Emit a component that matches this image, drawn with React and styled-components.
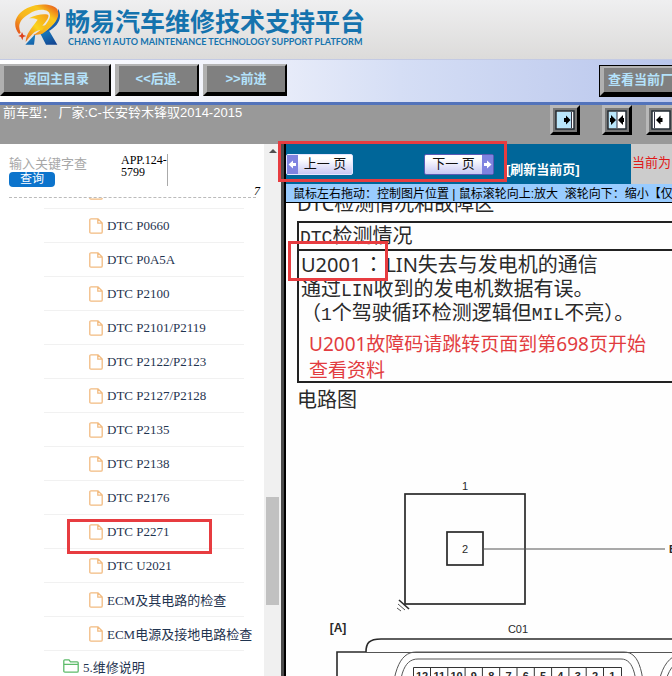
import React from 'react';
import styled, { createGlobalStyle } from 'styled-components';

const SANS = '"Liberation Sans", "Noto Sans CJK SC", sans-serif';
const SERIF = '"Liberation Serif", "Noto Sans CJK SC", serif';
const DOC = '"Noto Sans", "Noto Sans CJK SC", sans-serif';

const GlobalStyle = createGlobalStyle`
  * { box-sizing: border-box; }
  body { margin: 0; font-family: ${SANS}; font-size: 13px; overflow: hidden; }
  button, input { font-family: inherit; margin: 0; }
  svg { flex: none; }
`;

const Page = styled.div`
  display: flex;
  flex-direction: column;
  height: 100vh;
  background: #fff;
`;

const Header = styled.header`
  display: flex;
  align-items: flex-start;
  gap: 3px;
  height: 59px;
  padding: 4px 14px 0;
  background: linear-gradient(#efeff0, #dcdbda);
  overflow: hidden;
`;

const Brand = styled.div`
  display: flex;
  flex-direction: column;
  white-space: nowrap;
  color: #1573ae;
`;

const BrandName = styled.h1`
  margin: 0;
  font: 700 25px/32px "Noto Sans CJK SC", sans-serif;
`;

const BrandSub = styled.span`
  padding-left: 3px;
  font: 700 9px/11px Lato, sans-serif;
`;

const Toolbar = styled.nav`
  display: flex;
  gap: 4px;
  height: 46px;
  padding-top: 4px;
  border-top: 1px solid #c3cae4;
  border-bottom: 3px solid #5273bb;
  background: linear-gradient(90deg, #fff 0, #f0f2fb 230px, #d5def5 400px, #b9c6ec 672px);
  overflow: hidden;
`;

const BevelButton = styled.button`
  flex: none;
  width: ${(p) => p.$width}px;
  height: 32px;
  padding: 0 0 3px;
  border-style: solid;
  border-width: 2px 2px 4px 4px;
  border-color: #b4b4b4 #000 #000 #b0b0b0;
  background: #808080;
  color: #b4e2fb;
  font-size: 13px;
  font-weight: 700;
  white-space: nowrap;
  ${(p) => p.$end && 'margin: 2px -7px 0 auto; outline: 1px solid #000; height: 30px;'}
`;

const StatusBar = styled.div`
  display: flex;
  justify-content: space-between;
  height: 39px;
  padding-left: 3px;
  background: #999;
  color: #fff;
  line-height: 16px;
  white-space: pre;
  overflow: hidden;
`;

const FrameButtons = styled.div`
  display: flex;
  gap: 22px;
  margin-right: -4px;
`;

const FrameButton = styled.button`
  width: 30px;
  height: 30px;
  padding: 2px;
  border: 3px solid;
  border-color: #b8b8b8 #000 #000 #b8b8b8;
  background: #777;
  line-height: 0;
  &:last-child { margin-left: -8px; }
`;

const Body = styled.div`
  display: flex;
  flex: 1;
  min-height: 0;
`;

const Sidebar = styled.aside`
  display: flex;
  flex-direction: column;
  position: relative;
  flex: 0 0 264px;
  min-width: 0;
  font-family: ${SERIF};
`;

const SearchForm = styled.form`
  display: flex;
  flex: none;
  height: 54px;
  margin: 0 8px 0 9px;
  padding-top: 10px;
  border-bottom: 1px dashed #bbb;
`;

const SearchField = styled.div`
  display: flex;
  flex-direction: column;
  align-items: flex-start;
  width: 112px;
  padding-top: 1px;
`;

const SearchInput = styled.input`
  width: 79px;
  height: 17px;
  padding: 0;
  border: 0;
  background: transparent;
  font-size: 13px;
  outline: 0;
  &::placeholder { color: #a8a8a8; }
`;

const SearchButton = styled.button`
  width: 46px;
  height: 15px;
  padding: 0;
  border: 0;
  border-radius: 4px;
  background: #0c74cc;
  color: #fff;
  font-size: 12px;
  line-height: 15px;
`;

const Version = styled.span`
  width: 47px;
  height: 32px;
  border-right: 1px solid #aaa;
  font-size: 12px;
  line-height: 12px;
  white-space: pre;
`;

const Counter = styled.span`
  align-self: flex-end;
  margin: 0 -4px 0 auto;
  font-size: 12px;
  font-style: italic;
  line-height: 12px;
`;

const Tree = styled.ul`
  flex: 1;
  min-height: 0;
  margin: 0;
  padding: 0;
  list-style: none;
  overflow: hidden;
`;

const TreeItem = styled.li`
  height: 34px;
  margin-left: ${(p) => (p.$folder ? 20 : 44)}px;
  margin-right: 20px;
  border-bottom: 1px solid #f1f1f1;
  &:first-child { margin-top: -23px; }
`;

const TreeLink = styled.a`
  display: flex;
  align-items: center;
  gap: 4px;
  height: ${(p) => (p.$folder ? 30 : 33)}px;
  padding-left: ${(p) => (p.$folder ? 43 : 45)}px;
  color: #1f3450;
  font-size: 13px;
  text-decoration: none;
  white-space: nowrap;
`;

const ScrollTrack = styled.div`
  display: flex;
  flex-direction: column;
  justify-content: space-between;
  align-items: center;
  flex: 0 0 17px;
  padding: 5px 0 71px;
  background: #f0f0f0;
`;

const ScrollUp = styled.span`
  border: 4px solid transparent;
  border-top: 0;
  border-bottom: 4px solid #505050;
`;

const ScrollThumb = styled.span`
  width: 13px;
  height: 108px;
  background: #c1c1c1;
`;

const Viewer = styled.main`
  position: relative;
  display: flex;
  flex-direction: column;
  flex: 1;
  min-width: 0;
  border-left: 3px solid #4b4b4b;
`;

const PagerRow = styled.div`
  display: flex;
  flex: none;
  height: 40px;
  border-left: 2px solid #000;
  background: #ccc;
`;

const Pager = styled.div`
  display: flex;
  align-items: center;
  flex: 0 0 345px;
  background: #069;
`;

const PageButton = styled.button`
  display: flex;
  flex-direction: ${(p) => (p.$next ? 'row-reverse' : 'row')};
  align-items: center;
  justify-content: space-between;
  width: ${(p) => (p.$next ? 70 : 67)}px;
  height: 21px;
  margin-left: ${(p) => (p.$next ? 71 : 0)}px;
  padding: 0;
  border: 1px solid ${(p) => (p.$next ? '#5b5bb5' : '#e6e6ff')};
  border-radius: 2px;
  background: linear-gradient(#fff 20%, #c8c8f4);
  color: #111;
  font-size: 13px;
  line-height: 18px;
  white-space: nowrap;
`;

const PageLabel = styled.span`
  flex: 1;
  text-align: center;
`;

const Refresh = styled.a`
  margin: 8px 0 0 12px;
  color: #fff;
  font-size: 13px;
  font-weight: 700;
  text-decoration: none;
  white-space: nowrap;
`;

const Current = styled.span`
  padding-left: 1px;
  color: #e01818;
  font-size: 13px;
  line-height: 38px;
  white-space: nowrap;
  overflow: hidden;
`;

const Hint = styled.div`
  flex: none;
  height: 19px;
  padding-left: 7px;
  border-left: 2px solid #000;
  border-bottom: 1px solid #000;
  background: #9cf;
  font-size: 12px;
  line-height: 20px;
  white-space: pre;
  overflow: hidden;
`;

const Sheet = styled.article`
  flex: 1;
  min-height: 0;
  padding-left: 11px;
  border-left: 2px solid #000;
  background: #fefefe;
  color: #2a2a2a;
  font: 20px/24px ${DOC};
  white-space: nowrap;
  overflow: hidden;
`;

const SheetTitle = styled.h2`
  margin: ${(p) => (p.$cut ? '-11px 0 5px' : '5px 0 3px')};
  font-size: 20px;
  font-weight: 400;
  line-height: 24px;
`;

const Findings = styled.section`
  border: 2px solid #222;
  border-right: 0;
`;

const FindingHead = styled.h3`
  margin: 0;
  padding-left: 1px;
  border-bottom: 2px solid #222;
  font-size: 20px;
  font-weight: 400;
  line-height: 26px;
`;

const FindingBody = styled.div`
  height: 130px;
  padding: 2px 0 0 2px;
`;

const Mono = styled.span`
  font: 18px/20px "Liberation Mono", monospace;
`;

const Colon = styled.span`
  display: inline-block;
  width: 24px;
  text-align: center;
  font-family: "Noto Sans CJK TC", sans-serif;
  line-height: 20px;
`;

const Line = styled.p`
  margin: 0;
  height: 24px;
`;

const Note = styled.p`
  margin: 6px 0 0 8px;
  color: #e23c40;
  font-size: 19px;
  line-height: 26px;
`;

const Drawing = styled.svg`
  display: block;
  margin-left: -11px;
  font-family: "Liberation Sans", sans-serif;
`;

const Mark = styled.div`
  position: absolute;
  z-index: 2;
  left: ${(p) => p.$x}px;
  top: ${(p) => p.$y}px;
  width: ${(p) => p.$w}px;
  height: ${(p) => p.$h}px;
  border: 3px solid #e73c40;
  pointer-events: none;
`;

const Logo = () => (
  <svg width="48" height="43" viewBox="0 0 144 129" aria-hidden="true">
    <defs>
      <linearGradient id="ring" x1="0" y1="1" x2="1" y2="0">
        <stop offset="0" stopColor="#e2431c" />
        <stop offset=".4" stopColor="#f7b51c" />
        <stop offset=".7" stopColor="#f9c71c" />
        <stop offset="1" stopColor="#e4451c" />
      </linearGradient>
      <linearGradient id="bolt" x1="0" y1="1" x2="1" y2="0">
        <stop offset="0" stopColor="#e8641c" />
        <stop offset=".5" stopColor="#fbd51c" />
        <stop offset="1" stopColor="#f49a1c" />
      </linearGradient>
      <linearGradient id="leg" x1="0" y1="0" x2="1" y2="1">
        <stop offset="0" stopColor="#1c9bd8" />
        <stop offset="1" stopColor="#123f8c" />
      </linearGradient>
    </defs>
    <path d="M34 122 L64 90 L60 122Z M78 87 L104 78 L130 122 L96 122Z" fill="url(#leg)" />
    <path d="M132 14 C148 42 130 68 103 82 L84 88 C112 72 134 48 132 14Z" fill="#1b60ae" />
    <path d="M15 90 C-8 62 5 29 40 12 C76 -5 119 0 130 16 C142 42 116 68 84 90 L57 94 C84 78 106 54 108 36 C109 14 72 11 45 30 C17 46 10 65 20 86Z" fill="url(#ring)" />
    <path d="M45 43 C66 32 88 28 102 32 C107 38 98 50 85 65 L96 64 L84 79 C67 78 58 84 35 114 C37 88 49 77 71 47 C61 42 54 43 45 43Z" fill="url(#bolt)" />
    <path d="M24 84 L28 93 L37 96 L28 99 L25 109 L21 99 L13 96 L21 92Z" fill="#de421c" />
  </svg>
);

const FileIcon = () => (
  <svg width="14" height="16" viewBox="0 0 14 16" fill="none" stroke="#f2bb80" strokeWidth="1.3" aria-hidden="true">
    <path d="M2 .8H9L13.2 5V14Q13.2 15.2 12 15.2H2Q.8 15.2 .8 14V2Q.8 .8 2 .8ZM8.8 1V5.2H13" />
  </svg>
);

const FolderIcon = () => (
  <svg width="16" height="14" viewBox="0 0 16 14" fill="none" stroke="#5dbb6a" strokeWidth="1.3" aria-hidden="true">
    <path d="M.8 12V1.8Q.8 .8 1.8 .8H6L7.5 2.8H14.2Q15.2 2.8 15.2 3.8V12Q15.2 13.2 14 13.2H2Q.8 13.2 .8 12ZM1 5.3H15" />
  </svg>
);

const FrameIcon = ({ kind }) => (
  <svg width="20" height="20" viewBox="0 0 20 20" aria-hidden="true">
    <rect x="1" y="1" width="18" height="18" fill="#fff" stroke="#222b33" strokeWidth="1.5" />
    {kind !== 'left' && <rect x="2" y="2" width={kind === 'right' ? 14 : 8} height="16" fill="#b9e6fb" />}
    <path d={{ right: 'M16.5 2V18', both: 'M10 2V18', left: 'M3.5 2V18' }[kind]} stroke="#334" />
    {kind === 'right' && <path d="M9 8H11V5.5L15.5 10L11 14.5V12H9Z" fill="#000" />}
    {kind === 'both' && <path d="M3 8H4V5L9 10L4 15V12H3Z M17 8H16V5L11 10L16 15V12H17Z" fill="#000" />}
    {kind === 'left' && <path d="M11.5 8H9.5V5.5L5 10L9.5 14.5V12H11.5Z" fill="#000" />}
  </svg>
);

const CapIcon = ({ next }) => (
  <svg width="11" height="19" viewBox="0 0 11 19" aria-hidden="true">
    <rect width="11" height="19" fill="#7f83e0" />
    <path d={next ? 'M2 8H5V5.5L9.5 9.5L5 13.5V11H2Z' : 'M9 8H6V5.5L1.5 9.5L6 13.5V11H9Z'} fill="#fff" />
  </svg>
);

const CODES = ['P0660', 'P0A5A', 'P2100', 'P2101/P2119', 'P2122/P2123', 'P2127/P2128', 'P2135', 'P2138', 'P2176', 'P2271', 'U2021'];
const FILES = ['', ...CODES.map((c) => `DTC ${c}`), 'ECM及其电路的检查', 'ECM电源及接地电路检查'];
const PINS = [12, 11, 10, 9, 8, 7, 6, 5, 4, 3, 2, 1];

const Circuit = () => (
  <Drawing width="600" height="300" viewBox="286 414 600 300" fill="none" stroke="#2a2a2a">
    <rect x="405" y="493" width="120" height="110" strokeWidth="1.7" />
    <rect x="447" y="531" width="36" height="33" strokeWidth="1.7" />
    <path d="M483 548H665" stroke="#555" />
    <path d="M399 599L409 608" strokeWidth="1.6" />
    <path d="M398 603L405 609M397 607L401 610" stroke="#555" />
    <path d="M337 720V651H366C366 642 369 638 381 638H886" strokeWidth="1.6" />
    <g stroke="#555">
      <path d="M366 651.5H886" />
      <path d="M391 720C391 672 399 651 416 651H624C640 651 645 672 645 720" />
      <path d="M398 720C398 675 403 658 418 658H621C634 658 638 675 638 720" />
      <path d="M656 720C656 676 662 652 690 651" />
      <path d="M662 720C662 680 668 658 690 658" />
      <path d="M413.5 720V666.5H621.5V720" stroke="#333" />
      {PINS.slice(1).map((pin, i) => (
        <path key={pin} d={`M${430.5 + i * 17.3} 667V720`} stroke="#333" />
      ))}
    </g>
    <g stroke="none" fill="#2a2a2a" fontSize="11" textAnchor="middle">
      <text x="465" y="489">1</text>
      <text x="465" y="552">2</text>
      <text x="673" y="552" fontWeight="700">B</text>
      <text x="518" y="632">C01</text>
      <text x="338" y="631" fontSize="12" fontWeight="700">[A]</text>
      {PINS.map((pin, i) => (
        <text key={pin} x={422 + i * 17.3} y="679" fontWeight="700">{pin}</text>
      ))}
    </g>
  </Drawing>
);

export default function App() {
  return (
    <Page>
      <GlobalStyle />
      <Header>
        <Logo />
        <Brand>
          <BrandName>畅易汽车维修技术支持平台</BrandName>
          <BrandSub>CHANG YI AUTO MAINTENANCE TECHNOLOGY SUPPORT PLATFORM</BrandSub>
        </Brand>
      </Header>
      <Toolbar>
        <BevelButton $width={111}>返回主目录</BevelButton>
        <BevelButton $width={84}>&lt;&lt;后退.</BevelButton>
        <BevelButton $width={84}>&gt;&gt;前进</BevelButton>
        <BevelButton $width={79} $end>查看当前厂</BevelButton>
      </Toolbar>
      <StatusBar>
        <span>前车型： 厂家:C-长安铃木锋驭2014-2015</span>
        <FrameButtons>
          <FrameButton aria-label="右"><FrameIcon kind="right" /></FrameButton>
          <FrameButton aria-label="中"><FrameIcon kind="both" /></FrameButton>
          <FrameButton aria-label="左"><FrameIcon kind="left" /></FrameButton>
        </FrameButtons>
      </StatusBar>
      <Body>
        <Sidebar>
          <SearchForm onSubmit={(e) => e.preventDefault()}>
            <SearchField>
              <SearchInput aria-label="关键字" placeholder="输入关键字查" />
              <SearchButton>查询</SearchButton>
            </SearchField>
            <Version>{'APP.124-\n5799'}</Version>
            <Counter>7</Counter>
          </SearchForm>
          <Tree>
            {FILES.map((name) => (
              <TreeItem key={name}>
                <TreeLink href="#"><FileIcon />{name}</TreeLink>
              </TreeItem>
            ))}
            <TreeItem $folder>
              <TreeLink href="#" $folder><FolderIcon />5.维修说明</TreeLink>
            </TreeItem>
          </Tree>
          <Mark $x={67} $y={375} $w={145} $h={35} />
        </Sidebar>
        <ScrollTrack>
          <ScrollUp />
          <ScrollThumb />
        </ScrollTrack>
        <Viewer>
          <PagerRow>
            <Pager>
              <PageButton><CapIcon /><PageLabel>上一 页</PageLabel></PageButton>
              <PageButton $next><CapIcon next /><PageLabel>下一 页</PageLabel></PageButton>
              <Refresh href="#">[刷新当前页]</Refresh>
            </Pager>
            <Current>当前为</Current>
          </PagerRow>
          <Hint>鼠标左右拖动：控制图片位置 | 鼠标滚轮向上:放大  滚轮向下：缩小【仅</Hint>
          <Sheet>
            <SheetTitle $cut>DTC检测情况和故障区</SheetTitle>
            <Findings>
              <FindingHead><Mono>DTC</Mono>检测情况</FindingHead>
              <FindingBody>
                <Line>U2001<Colon>：</Colon>LIN失去与发电机的通信</Line>
                <Line>通过<Mono>LIN</Mono>收到的发电机数据有误。</Line>
                <Line>（<Mono>1</Mono>个驾驶循环检测逻辑但<Mono>MIL</Mono>不亮）。</Line>
                <Note>U2001故障码请跳转页面到第698页开始<br />查看资料</Note>
              </FindingBody>
            </Findings>
            <SheetTitle>电路图</SheetTitle>
            <Circuit />
          </Sheet>
          <Mark $x={-6} $y={-3} $w={229} $h={41} />
          <Mark $x={4} $y={97} $w={100} $h={40} />
        </Viewer>
      </Body>
    </Page>
  );
}
